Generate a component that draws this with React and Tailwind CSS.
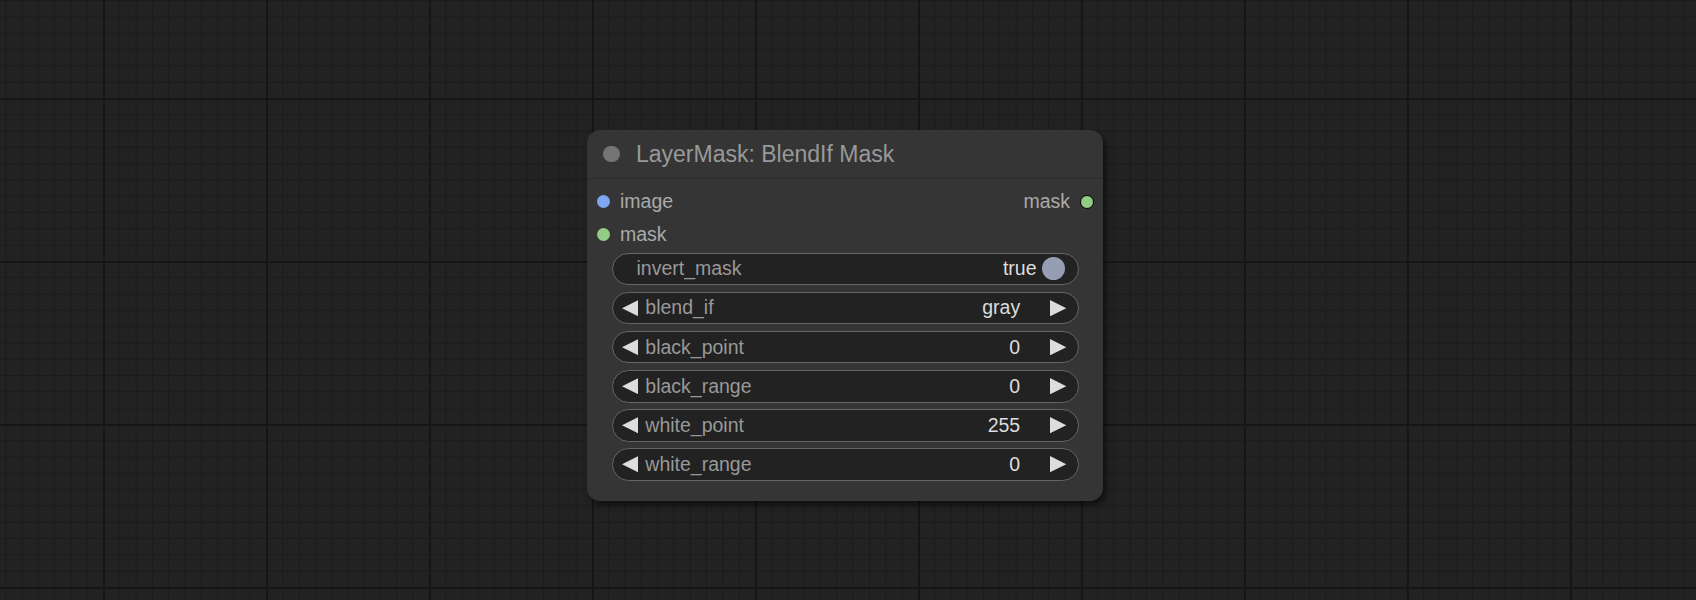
import React from "react";

const slots = [
  { name: "image", color: "bg-[#7ea6f2]", out: { name: "mask", color: "bg-[#92cc85]" } },
  { name: "mask", color: "bg-[#92cc85]" },
];

const widgets = [
  { name: "blend_if", value: "gray" },
  { name: "black_point", value: "0" },
  { name: "black_range", value: "0" },
  { name: "white_point", value: "255" },
  { name: "white_range", value: "0" },
];

const Arrow = ({ dir }) => (
  <svg width="16.3" height="16.3" viewBox="0 0 10 10" className="shrink-0">
    {dir === "left" ? (
      <path d="M10 0 L0 5 L10 10 Z" fill="#dddddd" />
    ) : (
      <path d="M0 0 L10 5 L0 10 Z" fill="#dddddd" />
    )}
  </svg>
);

const SlotRow = ({ slot }) => (
  <div className="flex items-center h-[32.6px] pt-[2px]">
    <span className={`ml-[10px] w-[13px] h-[13px] rounded-full ${slot.color} shrink-0`} />
    <span className="ml-[10px] text-[19.5px] text-[#aaaaaa] leading-none">{slot.name}</span>
    {slot.out && (
      <div className="ml-auto mr-[9px] flex items-center">
        <span className="text-[19.5px] text-[#aaaaaa] leading-none">{slot.out.name}</span>
        <span className={`ml-[10px] w-[14px] h-[14px] rounded-full border-[1.5px] border-black ${slot.out.color}`} />
      </div>
    )}
  </div>
);

const ComboWidget = ({ w }) => (
  <div className="flex items-center h-[32.6px] rounded-full bg-[#222222] border border-[#656565] pl-[9px] pr-[11px]">
    <Arrow dir="left" />
    <span className="ml-[7.5px] text-[19.5px] text-[#999999]">{w.name}</span>
    <span className="ml-auto text-[19.5px] text-[#dddddd]">{w.value}</span>
    <span className="ml-[30px] flex">
      <Arrow dir="right" />
    </span>
  </div>
);

const App = () => {
  return (
    <div className="relative w-[1696px] h-[600px] overflow-hidden bg-[#222222] bg-[linear-gradient(90deg,#161616_2px,transparent_2px),linear-gradient(180deg,#161616_2px,transparent_2px),linear-gradient(90deg,#1b1b1b_1px,transparent_1px),linear-gradient(180deg,#1b1b1b_1px,transparent_1px)] bg-[size:163px_163px,163px_163px,16.3px_16.3px,16.3px_16.3px] bg-[position:103px_98px,103px_98px,103px_98px,103px_98px] font-['Liberation_Sans',Arial,sans-serif]">
      <div className="absolute left-[587px] top-[130px] w-[516px] h-[371px] rounded-[13px] bg-[#353535] shadow-[3px_4px_6px_rgba(0,0,0,0.55)]">
        <div className="h-[49px] flex items-center border-b border-[#2c2c2c]">
          <span className="ml-[16px] w-[16.5px] h-[16.5px] rounded-full bg-[#747474] shrink-0" />
          <span className="ml-[16.5px] text-[23px] text-[#999999]">LayerMask: BlendIf Mask</span>
        </div>
        <div className="pt-[5.5px]">
          {slots.map(s => (
            <SlotRow key={s.name} slot={s} />
          ))}
        </div>
        <div className="mx-[24.5px] mt-[3px] flex flex-col gap-[6.5px]">
          <div className="flex items-center h-[32.6px] rounded-full bg-[#222222] border border-[#656565] pl-[24px] pr-[13px]">
            <span className="text-[19.5px] text-[#999999]">invert_mask</span>
            <span className="ml-auto text-[19.5px] text-[#dddddd]">true</span>
            <span className="ml-[5px] w-[23px] h-[23px] rounded-full bg-[#959eb3]" />
          </div>
          {widgets.map(w => (
            <ComboWidget key={w.name} w={w} />
          ))}
        </div>
      </div>
    </div>
  );
};

export default App;
